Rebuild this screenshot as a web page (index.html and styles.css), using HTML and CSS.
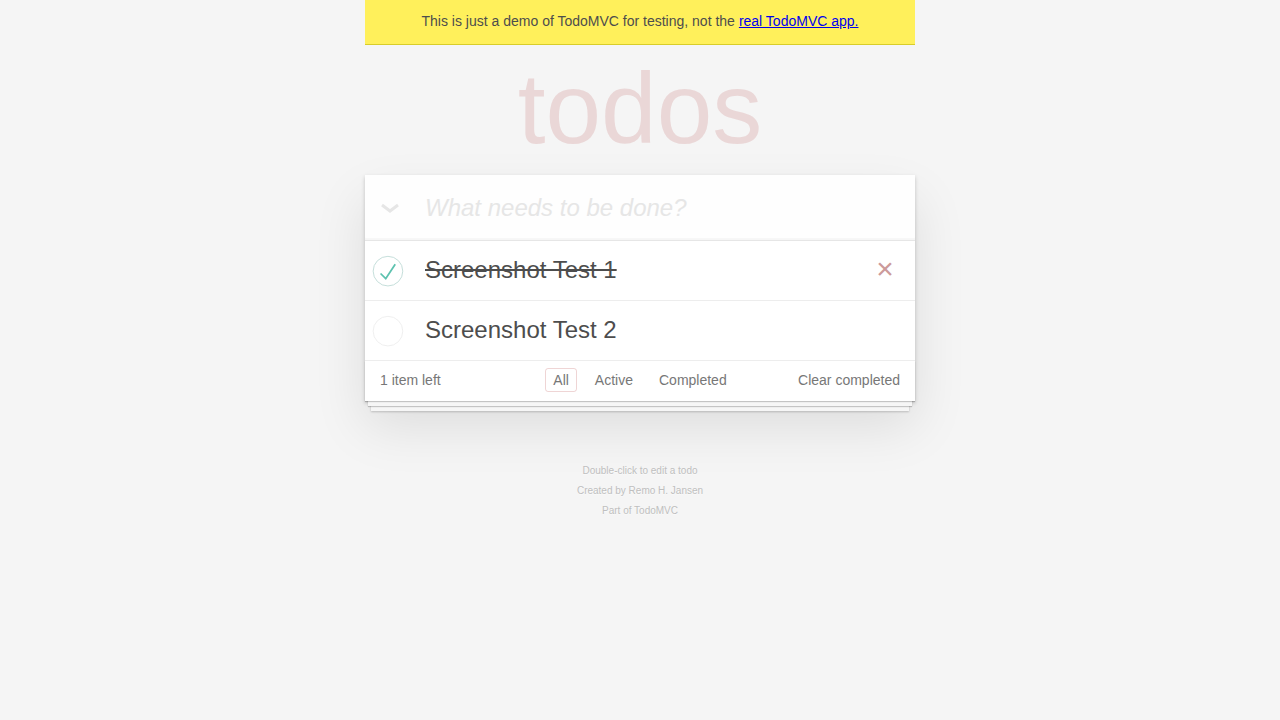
FILE: index.html
```html
<!DOCTYPE html>
<html lang="en">
<head>
<meta charset="utf-8">
<title>TodoMVC</title>
<link rel="stylesheet" href="styles.css">
</head>
<body>
<div class="page">
  <div class="demo-bar">This is just a demo of TodoMVC for testing, not the <a href="#">real TodoMVC app.</a></div>
  <h1 class="title">todos</h1>
  <section class="todoapp">
    <header class="new-row">
      <span class="toggle-all">
        <svg width="20" height="12" viewBox="0 0 20 12"><path d="M2 2 L10 8 L18 2" fill="none" stroke="#e6e6e6" stroke-width="3" stroke-linejoin="miter"/></svg>
      </span>
      <span class="new-todo">What needs to be done?</span>
    </header>
    <ul class="todo-list">
      <li class="todo completed">
        <svg class="toggle" width="40" height="40" viewBox="-10 -18 100 135"><circle cx="50" cy="50" r="50" fill="none" stroke="#bddad5" stroke-width="3"/><path fill="#5dc2af" d="M72 25L42 71 27 56l-4 4 20 20 34-52z"/></svg>
        <label class="todo-label">Screenshot Test 1</label>
        <button class="destroy">×</button>
      </li>
      <li class="todo">
        <svg class="toggle" width="40" height="40" viewBox="-10 -18 100 135"><circle cx="50" cy="50" r="50" fill="none" stroke="#ededed" stroke-width="3"/></svg>
        <label class="todo-label">Screenshot Test 2</label>
      </li>
    </ul>
    <footer class="footer">
      <span class="todo-count">1 item left</span>
      <ul class="filters">
        <li><a class="selected" href="#">All</a></li>
        <li><a href="#">Active</a></li>
        <li><a href="#">Completed</a></li>
      </ul>
      <button class="clear-completed">Clear completed</button>
    </footer>
  </section>
  <footer class="info">
    <p>Double-click to edit a todo</p>
    <p>Created by <span class="link">Remo H. Jansen</span></p>
    <p>Part of <span class="link">TodoMVC</span></p>
  </footer>
</div>
</body>
</html>
```

FILE: styles.css
```css
html, body {
  margin: 0;
  padding: 0;
}

body {
  font-family: "Liberation Sans", Arial, Helvetica, sans-serif;
  font-size: 14px;
  line-height: 1.4em;
  background: #f5f5f5;
  color: #4d4d4d;
}

.page {
  width: 550px;
  margin: 0 auto;
}

.demo-bar {
  height: 44px;
  background: #fff05b;
  border-bottom: 1px solid #d8cd2a;
  display: flex;
  align-items: center;
  justify-content: center;
  font-size: 14px;
  color: #4d4d4d;
}

.demo-bar a {
  color: #0000ee;
  text-decoration: underline;
  margin-left: 4px;
}

.title {
  margin: 0;
  height: 130px;
  box-sizing: border-box;
  padding-top: 13px;
  font-size: 100px;
  line-height: 100px;
  font-weight: 100;
  text-align: center;
  color: rgba(175, 47, 47, 0.15);
}

.todoapp {
  background: #fff;
  box-shadow: 0 2px 4px 0 rgba(0, 0, 0, 0.2), 0 25px 50px 0 rgba(0, 0, 0, 0.1);
  margin-bottom: 40px;
}

.new-row {
  display: flex;
  align-items: center;
  height: 65px;
  box-shadow: inset 0 -2px 1px rgba(0, 0, 0, 0.03);
  background: rgba(0, 0, 0, 0.003);
}

.toggle-all {
  width: 60px;
  display: flex;
  justify-content: center;
  box-sizing: border-box;
  padding-top: 2px;
}

.toggle-all svg {
  margin-left: -11px;
}

.new-todo {
  font-size: 24px;
  font-style: italic;
  font-weight: 300;
  color: #e6e6e6;
  line-height: 1.4em;
}

.todo-list {
  margin: 0;
  padding: 0;
  list-style: none;
  border-top: 1px solid #e6e6e6;
}

.todo {
  display: flex;
  align-items: center;
  border-bottom: 1px solid #ededed;
  font-size: 24px;
}

.toggle {
  flex: none;
  margin-right: 20px;
  margin-top: 1px;
}

.todo-label {
  flex: 1;
  padding: 15px 15px 15px 0;
  line-height: 1.2;
  color: #4d4d4d;
}

.completed .todo-label {
  text-decoration: line-through;
}

.destroy {
  flex: none;
  width: 40px;
  height: 40px;
  margin-right: 10px;
  margin-bottom: 3px;
  padding: 0;
  border: 0;
  background: none;
  font-family: "Liberation Sans", Arial, sans-serif;
  font-size: 30px;
  line-height: 1.1;
  color: #cc9a9a;
}

.footer {
  display: flex;
  align-items: center;
  height: 20px;
  padding: 9px 15px 11px;
  color: #777;
  font-size: 14px;
  box-shadow: 0 1px 1px rgba(0, 0, 0, 0.2), 0 8px 0 -3px #f6f6f6, 0 9px 1px -3px rgba(0, 0, 0, 0.2), 0 16px 0 -6px #f6f6f6, 0 17px 2px -6px rgba(0, 0, 0, 0.2);
}

.todo-count {
  width: 150px;
  line-height: 20px;
}

.filters {
  flex: 1;
  display: flex;
  justify-content: center;
  gap: 4px;
  margin: 0;
  padding: 0;
  list-style: none;
  line-height: 20px;
}

.filters a {
  display: inline;
  margin: 3px;
  padding: 3px 7px;
  border: 1px solid transparent;
  border-radius: 3px;
  color: inherit;
  text-decoration: none;
}

.filters a.selected {
  border-color: rgba(175, 47, 47, 0.2);
}

.clear-completed {
  width: 150px;
  text-align: right;
  padding: 0;
  border: 0;
  background: none;
  font-family: inherit;
  font-size: 14px;
  line-height: 20px;
  color: #777;
}

.info {
  margin-top: 65px;
  color: #bfbfbf;
  font-size: 10px;
  text-shadow: 0 1px 0 rgba(255, 255, 255, 0.5);
  text-align: center;
}

.info p {
  line-height: 1;
  margin: 10px 0;
}
```
